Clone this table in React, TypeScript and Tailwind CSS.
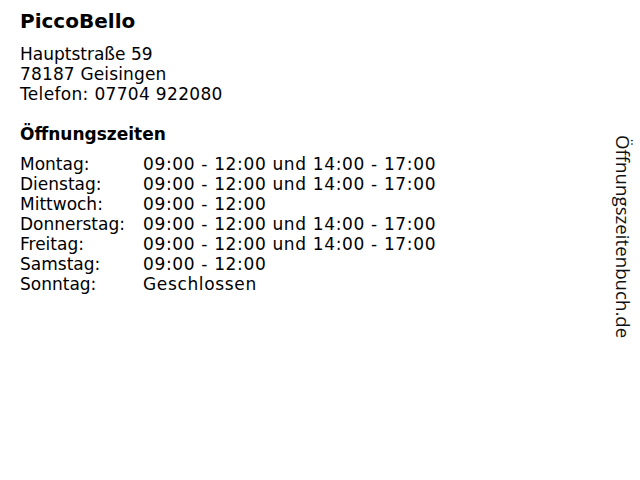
import React from "react";

const rows: [string, string][] = [
  ["Montag:", "09:00 - 12:00 und 14:00 - 17:00"],
  ["Dienstag:", "09:00 - 12:00 und 14:00 - 17:00"],
  ["Mittwoch:", "09:00 - 12:00"],
  ["Donnerstag:", "09:00 - 12:00 und 14:00 - 17:00"],
  ["Freitag:", "09:00 - 12:00 und 14:00 - 17:00"],
  ["Samstag:", "09:00 - 12:00"],
  ["Sonntag:", "Geschlossen"],
];

export default function App() {
  return (
    <div className="relative w-[640px] h-[480px] bg-white text-black overflow-hidden" style={{ fontFamily: '"DejaVu Sans", Verdana, sans-serif' }}>
      <div className="pl-5 pt-[9px]">
        <h1 className="text-[20px] leading-[24px] font-bold">PiccoBello</h1>
        <div className="mt-[11px] text-[17px] leading-[20px]">
          <div>Hauptstraße 59</div>
          <div className="tracking-[0.15px]">78187 Geisingen</div>
          <div className="tracking-[0.33px]">Telefon: 07704 922080</div>
        </div>
        <h2 className="mt-[20px] text-[17px] leading-[20px] font-bold">Öffnungszeiten</h2>
        <div className="mt-[10px] text-[17px] leading-[20px]">
          {rows.map(([d, h]) => (
            <div key={d} className="flex">
              <div className="w-[123px]">{d}</div>
              <div className="tracking-[0.65px]">{h}</div>
            </div>
          ))}
        </div>
      </div>
      <div
        className="absolute right-[7px] top-[135px] text-[18.7px] leading-[20px] text-[#111]"
        style={{ writingMode: "vertical-rl", fontFamily: '"Open Sans", sans-serif' }}
      >
        Öffnungszeitenbuch.de
      </div>
    </div>
  );
}
